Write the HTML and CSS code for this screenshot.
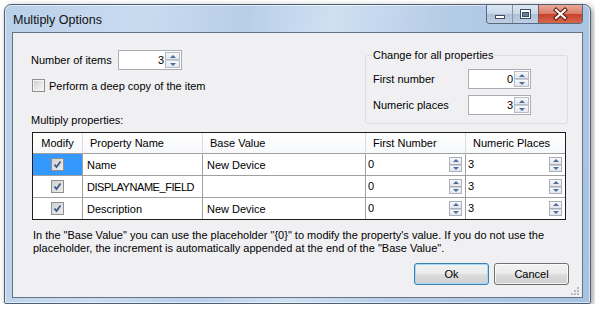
FILE: index.html
```html
<!DOCTYPE html>
<html>
<head>
    <title>Multiply Options</title>
    <link rel="stylesheet" href="styles.css">
</head>
<body>
<div class="window">
    <div class="titlebar">
        <span class="title">Multiply Options</span>
        <div class="caption">
            <span class="cap-btn cap-min">
                <svg width="25" height="18" viewBox="0 0 25 18"><rect x="8.5" y="10.5" width="9" height="3" fill="#fff" stroke="#3b4c61"/></svg>
            </span>
            <span class="cap-btn cap-max">
                <svg width="25" height="18" viewBox="0 0 25 18"><rect x="7.5" y="4.5" width="10" height="9" fill="#fff" stroke="#3b4c61"/><rect x="9.5" y="7.5" width="6" height="4" fill="#6d7f96" stroke="#3b4c61"/></svg>
            </span>
            <span class="cap-btn cap-close">
                <svg width="43" height="18" viewBox="0 0 43 18"><path d="M17 5 L26 13 M26 5 L17 13" stroke="#5a1a10" stroke-width="4.2" stroke-linecap="square"/><path d="M17 5 L26 13 M26 5 L17 13" stroke="#fff" stroke-width="2.2" stroke-linecap="square"/></svg>
            </span>
        </div>
    </div>

    <div class="client">
        <div class="top">
            <div class="left-col">
                <div class="field-row">
                    <span class="lbl">Number of items</span>
                    <div class="updown"><span class="val">3</span><span class="spin"><i class="up"></i><i class="down"></i></span></div>
                </div>
                <div class="check-row">
                    <span class="checkbox"></span>
                    <span>Perform a deep copy of the item</span>
                </div>
                <div class="section-label">Multiply properties:</div>
            </div>

            <fieldset class="group">
                <legend>Change for all properties</legend>
                <div class="field-row">
                    <span class="lbl">First number</span>
                    <div class="updown"><span class="val">0</span><span class="spin"><i class="up"></i><i class="down"></i></span></div>
                </div>
                <div class="field-row">
                    <span class="lbl">Numeric places</span>
                    <div class="updown"><span class="val">3</span><span class="spin"><i class="up"></i><i class="down"></i></span></div>
                </div>
            </fieldset>
        </div>

        <table class="grid">
            <colgroup>
                <col class="c-modify"><col class="c-name"><col class="c-base"><col class="c-num"><col class="c-places">
            </colgroup>
            <tr>
                <th class="center">Modify</th>
                <th>Property Name</th>
                <th>Base Value</th>
                <th>First Number</th>
                <th>Numeric Places</th>
            </tr>
            <tr>
                <td class="check-cell selected"><span class="grid-check"><svg width="13" height="13" viewBox="0 0 13 13"><path d="M3.5 6.5 L5.5 9 L9.5 3.5" fill="none" stroke="#3d5a8c" stroke-width="1.8"/></svg></span></td>
                <td>Name</td>
                <td>New Device</td>
                <td class="num-cell"><span>0</span><span class="spin cell-spin"><i class="up"></i><i class="down"></i></span></td>
                <td class="num-cell"><span>3</span><span class="spin cell-spin"><i class="up"></i><i class="down"></i></span></td>
            </tr>
            <tr>
                <td class="check-cell"><span class="grid-check"><svg width="13" height="13" viewBox="0 0 13 13"><path d="M3.5 6.5 L5.5 9 L9.5 3.5" fill="none" stroke="#3d5a8c" stroke-width="1.8"/></svg></span></td>
                <td class="caps">DISPLAYNAME_FIELD</td>
                <td></td>
                <td class="num-cell"><span>0</span><span class="spin cell-spin"><i class="up"></i><i class="down"></i></span></td>
                <td class="num-cell"><span>3</span><span class="spin cell-spin"><i class="up"></i><i class="down"></i></span></td>
            </tr>
            <tr class="last">
                <td class="check-cell"><span class="grid-check"><svg width="13" height="13" viewBox="0 0 13 13"><path d="M3.5 6.5 L5.5 9 L9.5 3.5" fill="none" stroke="#3d5a8c" stroke-width="1.8"/></svg></span></td>
                <td>Description</td>
                <td>New Device</td>
                <td class="num-cell"><span>0</span><span class="spin cell-spin"><i class="up"></i><i class="down"></i></span></td>
                <td class="num-cell"><span>3</span><span class="spin cell-spin"><i class="up"></i><i class="down"></i></span></td>
            </tr>
        </table>

        <p class="note">In the "Base Value" you can use the placeholder "{0}" to modify the property's value. If you do not use the<br>placeholder, the increment is automatically appended at the end of the "Base Value".</p>

        <div class="buttons">
            <button type="button" class="btn btn-default">Ok</button>
            <button type="button" class="btn">Cancel</button>
        </div>

        <svg class="grip" width="9" height="9" viewBox="0 0 9 9">
            <rect x="6" y="0" width="2" height="2" fill="#b8bcc4"/>
            <rect x="3" y="3" width="2" height="2" fill="#b8bcc4"/><rect x="6" y="3" width="2" height="2" fill="#b8bcc4"/>
            <rect x="0" y="6" width="2" height="2" fill="#b8bcc4"/><rect x="3" y="6" width="2" height="2" fill="#b8bcc4"/><rect x="6" y="6" width="2" height="2" fill="#b8bcc4"/>
        </svg>
    </div>
</div>
</body>
</html>
```

FILE: styles.css
```css
/* Page */
body {
    margin: 0;
    background: #fff;
    font-family: "Liberation Sans", Arial, sans-serif;
    font-size: 11px;
    color: #000;
}

/* Window frame */
.window {
    margin: 4px 0 0 4px;
    width: 587px;
    height: 300px;
    box-sizing: border-box;
    border: 1px solid #4f6075;
    border-radius: 7px 7px 2px 2px;
    background: linear-gradient(100deg, #b9d0ea 0%, #c9dbef 22%, #b8cee8 38%, #d0e0f2 52%, #b4cbe6 70%, #a8c2e1 100%);
    box-shadow: 2px 2px 6px rgba(0, 0, 0, 0.4), inset 0 0 0 1px rgba(255, 255, 255, 0.55);
    padding: 0 7px 5px 7px;
    display: flex;
    flex-direction: column;
}

.titlebar {
    height: 27px;
    display: flex;
    align-items: flex-start;
    justify-content: space-between;
}

.title {
    font-size: 12.5px;
    line-height: 26px;
    padding: 2px 0 0 1px;
    color: #111;
}

/* Caption buttons */
.caption {
    display: flex;
    height: 18px;
    border: 1px solid #59697d;
    border-top: none;
    border-radius: 0 0 4px 4px;
    overflow: hidden;
}

.cap-btn {
    display: block;
    height: 18px;
    background: linear-gradient(#dbe6f3 0%, #c9d8ea 50%, #aebfd6 51%, #bfd0e5 100%);
}

.cap-btn svg {
    display: block;
}

.cap-min {
    border-right: 1px solid #8797ab;
}

.cap-max {
    border-right: 1px solid #7d5a55;
}

.cap-close {
    background: linear-gradient(#e8a898 0%, #d97a66 50%, #c4412a 51%, #d7674c 100%);
}

/* Client area */
.client {
    position: relative;
    height: 266px;
    box-sizing: border-box;
    border: 1px solid #62738a;
    background: #f0f0f3;
    padding: 0 13px 0 18px;
}

.top {
    display: flex;
    align-items: flex-start;
    justify-content: space-between;
}

.left-col {
    padding-top: 17px;
}

.field-row {
    display: flex;
    align-items: center;
}

.left-col .lbl {
    width: 87px;
}

.check-row {
    display: flex;
    align-items: center;
    height: 13px;
    margin: 9px 0 0 1px;
}

.checkbox {
    width: 13px;
    height: 13px;
    box-sizing: border-box;
    margin-right: 4px;
    border: 1px solid #8e8f8f;
    background: linear-gradient(135deg, #cdcdcd 0%, #e9e9e9 60%, #f7f7f7 100%);
    box-shadow: inset 0 0 0 1px #f4f4f4;
}

.section-label {
    margin-top: 22px;
    line-height: 13px;
}

/* Group box */
.group {
    margin: 16px 1px 0 0;
    width: 203px;
    box-sizing: border-box;
    border: 1px solid #d5dfe5;
    border-radius: 3px;
    padding: 8px 0 8px 7px;
}

.group legend {
    padding: 0 1px;
    margin-left: -1px;
    line-height: 12px;
}

.group .field-row + .field-row {
    margin-top: 6px;
}

.group .lbl {
    width: 95px;
}

/* Numeric up/down */
.updown {
    display: flex;
    width: 64px;
    height: 20px;
    box-sizing: border-box;
    border: 1px solid #abadb3;
    background: #fff;
}

.group .updown {
    width: 63px;
}

.updown .val {
    flex: 1;
    text-align: right;
    line-height: 18px;
    padding-right: 1px;
}

.spin {
    width: 15px;
    display: flex;
    flex-direction: column;
    padding: 1px 1px 1px 0;
}

.spin i {
    flex: 1;
    display: flex;
    align-items: center;
    justify-content: center;
    border: 1px solid #b4bccb;
    background: linear-gradient(#f8f8f9, #e3e6ec);
}

.spin i + i {
    border-top-color: #c8ced8;
}

.spin i::after {
    content: "";
    border-left: 3px solid transparent;
    border-right: 3px solid transparent;
    border-bottom: 3px solid #4d6c9f;
}

.spin .down::after {
    border-bottom: 0;
    border-top: 3px solid #4d6c9f;
}

/* Data grid */
.grid {
    margin: 5px 0 0 1px;
    width: 534px;
    table-layout: fixed;
    border-collapse: separate;
    border-spacing: 0;
    border: 1px solid #1c1c1c;
    background: #fff;
}

.c-modify { width: 50px; }
.c-name { width: 120px; }
.c-base { width: 163px; }
.c-num { width: 100px; }
.c-places { width: 99px; }

.grid th {
    height: 20px;
    padding: 0 0 0 7px;
    font-weight: normal;
    text-align: left;
    background: linear-gradient(#ffffff, #f7f8fa);
    border-right: 1px solid #d9dde3;
    border-bottom: 1px solid #a0a0a0;
    white-space: nowrap;
}

.grid th.center {
    text-align: center;
    padding: 0;
}

.grid td {
    height: 21px;
    padding: 0 0 0 4px;
    border-right: 1px solid #a0a0a0;
    border-bottom: 1px solid #a0a0a0;
    white-space: nowrap;
    overflow: hidden;
}

.grid td.caps {
    letter-spacing: -0.45px;
}

.grid th:last-child,
.grid td:last-child {
    border-right: none;
}

.grid tr.last td {
    border-bottom: none;
}

.grid td.check-cell {
    padding: 0;
    text-align: center;
}

.grid td.selected {
    background: #3399ff;
}

.grid-check {
    display: inline-block;
    width: 13px;
    height: 13px;
    box-sizing: border-box;
    vertical-align: middle;
    border: 1px solid #8f8f8f;
    background: linear-gradient(135deg, #d2d2d2, #ececec);
}

.grid-check svg {
    display: block;
    margin: -1px;
}

.grid td.num-cell {
    padding: 0 3px 0 2px;
}

.num-cell {
    line-height: 21px;
}

.num-cell > span:first-child {
    float: left;
}

.cell-spin {
    float: right;
    width: 13px;
    height: 15px;
    padding: 0;
    margin-top: 3px;
    box-sizing: border-box;
}

.cell-spin i {
    border-color: #a9b0bc;
}

/* Footer */
.note {
    margin: 9px 0 0 2px;
    line-height: 13px;
    white-space: nowrap;
}

.buttons {
    display: flex;
    justify-content: flex-end;
    gap: 5px;
    margin-top: 8px;
}

.btn {
    width: 75px;
    height: 22px;
    padding: 0;
    box-sizing: border-box;
    border: 1px solid #707070;
    border-radius: 3px;
    background: linear-gradient(#f2f2f2 0%, #ebebeb 50%, #dddddd 51%, #cfcfcf 100%);
    box-shadow: inset 0 0 0 1px rgba(255, 255, 255, 0.75);
    font-family: "Liberation Sans", Arial, sans-serif;
    font-size: 11px;
    color: #000;
}

.btn-default {
    border-color: #3c7fb1;
    box-shadow: inset 0 0 0 1px #9fdcf7;
}

.grip {
    position: absolute;
    right: 2px;
    bottom: 1px;
}
```
